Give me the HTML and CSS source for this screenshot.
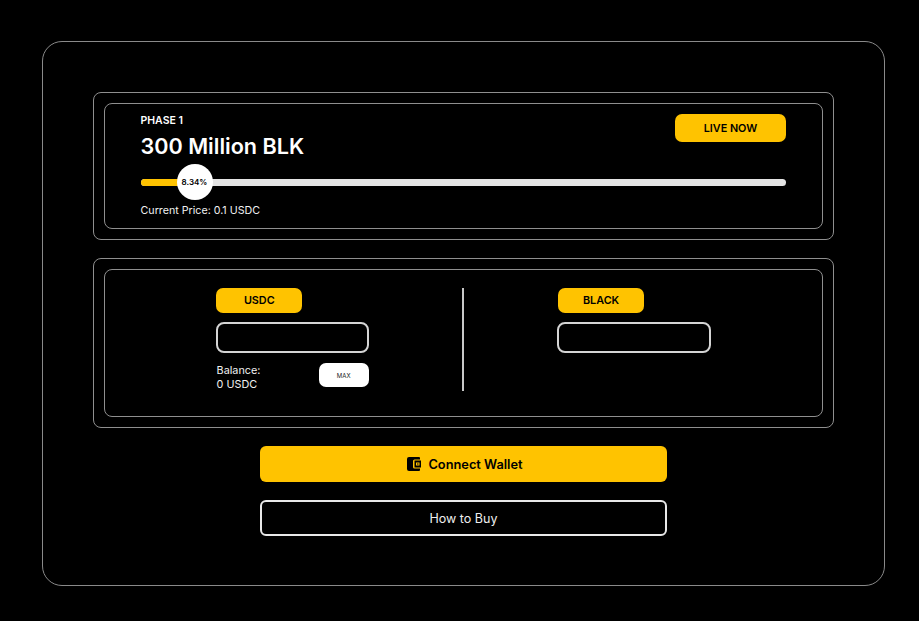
FILE: index.html
```html
<!DOCTYPE html>
<html lang="en">
<head>
  <meta charset="UTF-8">
  <meta name="viewport" content="width=device-width, initial-scale=1.0">
  <title>Presale</title>
  <link rel="stylesheet" href="styles.css">
</head>
<body>
  <div class="sale-card">
    <div class="panel">
      <div class="panel-inner phase">
        <div class="phase-top">
          <div>
            <div class="phase-label">PHASE 1</div>
            <h1 class="phase-title">300 Million BLK</h1>
          </div>
          <div class="pill live-pill">LIVE NOW</div>
        </div>
        <div class="progress">
          <div class="progress-fill"></div>
          <div class="progress-thumb">8.34%</div>
        </div>
        <div class="price">Current Price: 0.1 USDC</div>
      </div>
    </div>

    <div class="panel">
      <div class="panel-inner swap">
        <div class="swap-col">
          <div class="pill token-pill">USDC</div>
          <input class="amount" type="text">
          <div class="balance-row">
            <div class="balance">Balance:<br>0 USDC</div>
            <button class="max-btn" type="button">MAX</button>
          </div>
        </div>
        <div class="divider"></div>
        <div class="swap-col">
          <div class="pill token-pill">BLACK</div>
          <input class="amount" type="text">
        </div>
      </div>
    </div>

    <div class="actions">
      <button class="btn btn-connect" type="button">
        <svg class="wallet-icon" width="14" height="14" viewBox="0 0 14 14">
          <path fill="#000" fill-rule="evenodd" d="M2 0h10a1 1 0 0 1 1 1v1.500H7.500a1.500 1.500 0 0 0-1.500 1.500v6a1.500 1.500 0 0 0 1.500 1.500H13V13a1 1 0 0 1-1 1H2a2 2 0 0 1-2-2V2a2 2 0 0 1 2-2zM7.500 3.500H14v7H7.500zM9 5.500v3h3.500v-3zM10 6.500h1.500v1H10z"/>
        </svg>
        Connect Wallet
      </button>
      <button class="btn btn-how" type="button">How to Buy</button>
    </div>
  </div>
</body>
</html>
```

FILE: styles.css
```css
* {
    box-sizing: border-box;
}
body {
    margin: 0;
    background-color: #000;
    font-family: Inter, "Liberation Sans", sans-serif;
    color: #fff;
    height: 621px;
    overflow: hidden;
    padding: 41px 34px 35px 42px;
}
.sale-card {
    height: 545px;
    border: 1px solid #8a8a8a;
    border-radius: 20px;
    padding: 50px;
}
.panel {
    border: 1px solid #8f8f8f;
    border-radius: 8px;
    padding: 10px;
    margin-bottom: 18px;
}
.panel-inner {
    border: 1px solid #8f8f8f;
    border-radius: 8px;
}
.phase {
    height: 126px;
    padding: 10px 36px 0 35.500px;
}
.phase-top {
    display: flex;
    justify-content: space-between;
    align-items: flex-start;
}
.phase-label {
    font-size: 10.500px;
    font-weight: 600;
    line-height: 14px;
}
.phase-title {
    font-size: 21.600px;
    font-weight: 600;
    line-height: 27px;
    margin: 5px 0 0;
}
.pill {
    background-color: #ffc300;
    color: #000;
    font-weight: 600;
    font-size: 10.800px;
    display: flex;
    align-items: center;
    justify-content: center;
    border-radius: 7px;
}
.live-pill {
    width: 111px;
    height: 28px;
}
.progress {
    position: relative;
    height: 7px;
    margin-top: 19px;
    background-color: #e4e4e4;
    border-radius: 4px;
}
.progress-fill {
    width: 54px;
    height: 100%;
    background-color: #ffc300;
    border-radius: 4px 0 0 4px;
}
.progress-thumb {
    position: absolute;
    left: 36px;
    top: -15px;
    width: 36px;
    height: 36px;
    border-radius: 50%;
    background-color: #fff;
    color: #000;
    font-size: 8px;
    font-weight: 600;
    display: flex;
    align-items: center;
    justify-content: center;
}
.price {
    font-size: 10.700px;
    line-height: 14px;
    margin-top: 18px;
    color: #f0f0f0;
}
.swap {
    height: 148px;
    padding: 18px 111px 0 110.600px;
    display: flex;
    justify-content: space-between;
    align-items: flex-start;
}
.swap-col {
    width: 153.600px;
}
.token-pill {
    width: 86px;
    height: 25px;
    margin-left: 0.700px;
}
.amount {
    display: block;
    width: 100%;
    height: 31px;
    margin-top: 9px;
    background: #000;
    border: 2px solid #d4d4d4;
    border-radius: 8px;
}
.balance-row {
    display: flex;
    justify-content: space-between;
    align-items: flex-start;
    margin-top: 10px;
    padding: 0 0.500px 0 1px;
}
.balance {
    font-size: 10.800px;
    line-height: 14px;
    padding-top: 1px;
    color: #f0f0f0;
}
.max-btn {
    width: 50px;
    height: 24px;
    border: none;
    border-radius: 7px;
    background-color: #fff;
    color: #222;
    font-family: inherit;
    font-size: 6px;
    padding: 0;
}
.divider {
    width: 2px;
    height: 103px;
    margin-right: 1px;
    background-color: #c8c8c8;
}
.actions {
    display: flex;
    flex-direction: column;
    align-items: center;
    gap: 18px;
}
.btn {
    width: 407px;
    height: 36px;
    border-radius: 6px;
    font-family: inherit;
    font-size: 12.500px;
    display: flex;
    align-items: center;
    justify-content: center;
}
.btn-connect {
    background-color: #ffc300;
    border: none;
    color: #000;
    font-size: 12.800px;
    font-weight: 600;
    gap: 7px;
    padding: 0 0 0 3px;
}
.btn-how {
    background-color: #000;
    border: 2px solid #e8e8e8;
    color: #eee;
    padding-bottom: 1px;
}
```
